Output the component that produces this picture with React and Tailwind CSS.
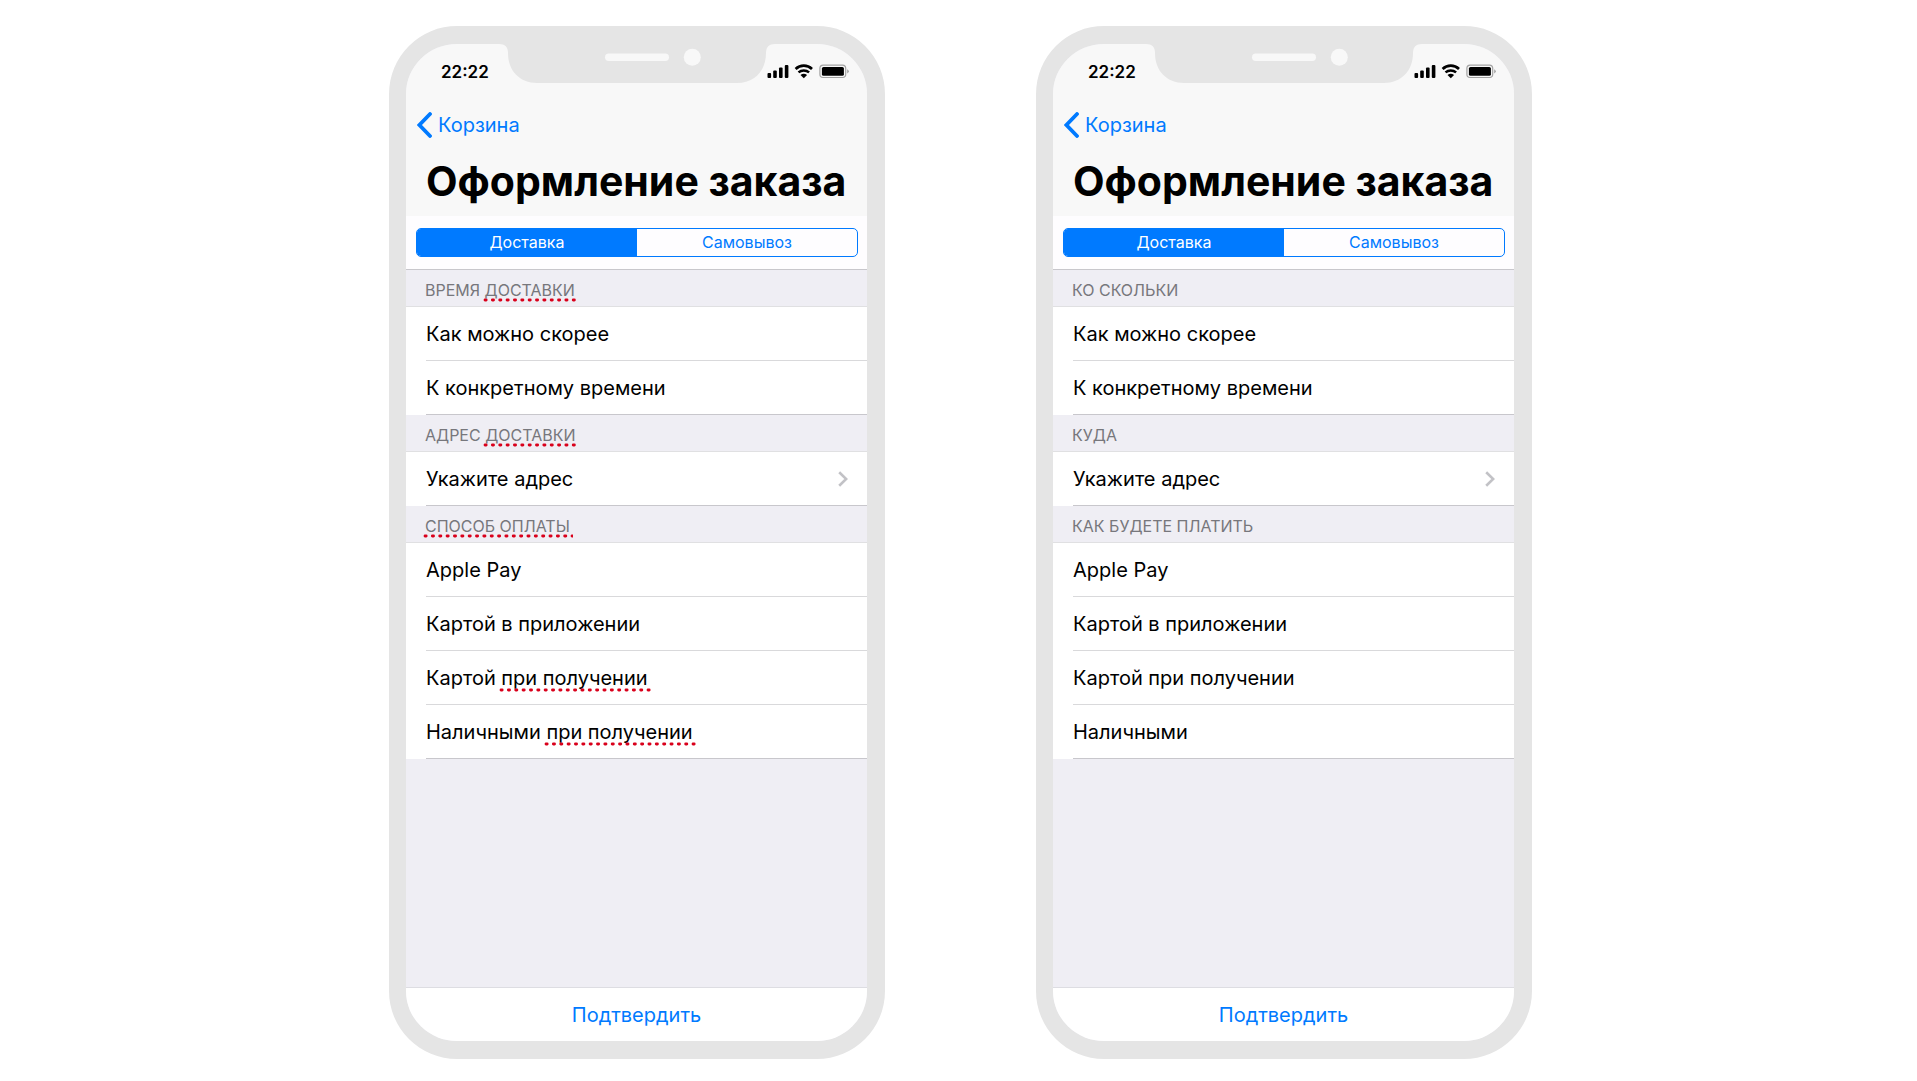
import React from "react";

const before = [
  {
    title: [{ text: "ВРЕМЯ " }, { text: "ДОСТАВКИ", marked: true }],
    rows: [{ parts: [{ text: "Как можно скорее" }] }, { parts: [{ text: "К конкретному времени" }] }],
  },
  {
    title: [{ text: "АДРЕС " }, { text: "ДОСТАВКИ", marked: true }],
    rows: [{ parts: [{ text: "Укажите адрес" }], disclosure: true }],
  },
  {
    title: [{ text: "СПОСОБ ОПЛАТЫ", marked: true }],
    rows: [
      { parts: [{ text: "Apple Pay" }] },
      { parts: [{ text: "Картой в приложении" }] },
      { parts: [{ text: "Картой " }, { text: "при получении", marked: true }] },
      { parts: [{ text: "Наличными " }, { text: "при получении", marked: true }] },
    ],
  },
];

const after = [
  {
    title: [{ text: "КО СКОЛЬКИ" }],
    rows: [{ parts: [{ text: "Как можно скорее" }] }, { parts: [{ text: "К конкретному времени" }] }],
  },
  {
    title: [{ text: "КУДА" }],
    rows: [{ parts: [{ text: "Укажите адрес" }], disclosure: true }],
  },
  {
    title: [{ text: "КАК БУДЕТЕ ПЛАТИТЬ" }],
    rows: [
      { parts: [{ text: "Apple Pay" }] },
      { parts: [{ text: "Картой в приложении" }] },
      { parts: [{ text: "Картой при получении" }] },
      { parts: [{ text: "Наличными" }] },
    ],
  },
];

function Parts({ parts }) {
  return (
    <span className="whitespace-pre">
      {parts.map((part) =>
        part.marked ? (
          <span key={part.text} className="relative inline-block">
            {part.text}
            <svg className="absolute -bottom-0.5 -left-0.5 h-[4px] w-[calc(100%+5px)]" aria-hidden="true">
              <line x1="2" y1="2" x2="100%" y2="2" stroke="#d9001b" strokeWidth="2.8" strokeLinecap="round" strokeDasharray="1.2 6.15" />
            </svg>
          </span>
        ) : (
          <span key={part.text}>{part.text}</span>
        )
      )}
    </span>
  );
}

function Notch() {
  return (
    <svg className="absolute top-0 left-[93px]" width="276" height="40" viewBox="0 0 276 40" aria-hidden="true">
      <path d="M0 -1V0C6 0 9 3 9 9C9 27 21 39 38 39H238C255 39 267 27 267 9C267 3 270 0 276 0V-1Z" fill="#e5e5e5" />
      <rect x="106" y="9.5" width="64" height="7.5" rx="3.75" fill="#f8f8f8" />
      <circle cx="193.3" cy="13.2" r="8.5" fill="#f8f8f8" />
    </svg>
  );
}

function StatusIcons() {
  return (
    <svg width="83" height="15" viewBox="0 0 83 15" aria-hidden="true">
      <rect x="0.5" y="9" width="3.6" height="5" rx="1" />
      <rect x="6.2" y="6.5" width="3.6" height="7.5" rx="1" />
      <rect x="12" y="3.5" width="3.6" height="10.5" rx="1" />
      <rect x="17.8" y="1" width="3.6" height="13" rx="1" />
      <path d="M28.6 4.9A12 12 0 0 1 45 4.9" fill="none" stroke="#000" strokeWidth="2.7" />
      <path d="M31.5 8.4A8 8 0 0 1 42.1 8.4" fill="none" stroke="#000" strokeWidth="2.5" />
      <path d="M33.5 11.1Q36.8 8.4 40.1 11.1L36.8 14.3Z" />
      <rect x="52.9" y="1.1" width="25.8" height="12.4" rx="3.2" fill="none" stroke="#a3a3a3" strokeWidth="1.2" />
      <rect x="54.9" y="3" width="22" height="8.8" rx="1.6" />
      <path d="M80.2 5.2Q81.8 6 81.8 7.3Q81.8 8.6 80.2 9.4Z" fill="#a3a3a3" />
    </svg>
  );
}

function Section({ section }) {
  return (
    <section>
      <h2 className="flex h-[37px] items-center border-b border-[#e0e0e2] px-[19px] pt-1 text-base leading-5 text-[#77777c]">
        <Parts parts={section.title} />
      </h2>
      <ul className="bg-white">
        {section.rows.map((row, i) => (
          <li key={i} className="pl-5">
            <button
              type="button"
              className={
                "flex h-[54px] w-full items-center justify-between border-b pr-[19px] text-left text-xl leading-6 " +
                (i === section.rows.length - 1 ? "border-[#c8c7cc]" : "border-[#d9d9db]")
              }
            >
              <Parts parts={row.parts} />
              {row.disclosure && (
                <svg width="10" height="16" viewBox="0 0 10 16" aria-hidden="true">
                  <path d="M1.2 1.2L8.2 8L1.2 14.8" fill="none" stroke="#c2c2c6" strokeWidth="2.6" />
                </svg>
              )}
            </button>
          </li>
        ))}
      </ul>
    </section>
  );
}

function Phone({ sections }) {
  return (
    <article className="relative flex min-h-[1033px] w-[496px] flex-col overflow-hidden rounded-[68px] border-y-[18px] border-r-[18px] border-l-[17px] border-[#e5e5e5] bg-[#efeef4]">
      <Notch />
      <header className="bg-[#f8f8f8]">
        <div className="flex h-14 items-center justify-between pr-[17px] pb-px pl-[35px]">
          <span className="text-[17px] leading-5 font-semibold">22:22</span>
          <StatusIcons />
        </div>
        <a href="#cart" className="ml-[11px] flex h-[50px] w-fit items-center gap-[6px] text-xl leading-6 text-[#007aff]">
          <svg width="15" height="26" viewBox="0 0 15 26" aria-hidden="true">
            <path d="M13 2L2.4 13L13 24" fill="none" stroke="#007aff" strokeWidth="3.8" strokeLinecap="round" strokeLinejoin="miter" />
          </svg>
          Корзина
        </a>
        <h1 className="h-[66px] pl-5 text-[41px] leading-[62px] font-bold whitespace-nowrap">Оформление заказа</h1>
      </header>
      <div className="h-[54px] border-b border-[#c8c7cc] bg-[#fefdff] pt-3 pr-[9px] pl-[10px]">
        <div className="grid h-[29px] grid-cols-2 overflow-hidden rounded-[5px] border border-[#007aff] text-base leading-5">
          <button type="button" aria-pressed="true" className="bg-[#007aff] pb-px text-white">Доставка</button>
          <button type="button" aria-pressed="false" className="pb-px text-[#007aff]">Самовывоз</button>
        </div>
      </div>
      {sections.map((section, i) => (
        <Section key={i} section={section} />
      ))}
      <footer className="mt-auto border-t border-[#dddde2] bg-white">
        <button type="button" className="h-[53px] w-full text-xl leading-6 text-[#007aff]">Подтвердить</button>
      </footer>
    </article>
  );
}

export default function App() {
  return (
    <main className="flex min-h-screen flex-wrap items-start justify-center gap-[151px] bg-white pt-[26px] pl-1 font-['Inter','Liberation_Sans',sans-serif] text-black">
      <Phone sections={before} />
      <Phone sections={after} />
    </main>
  );
}
